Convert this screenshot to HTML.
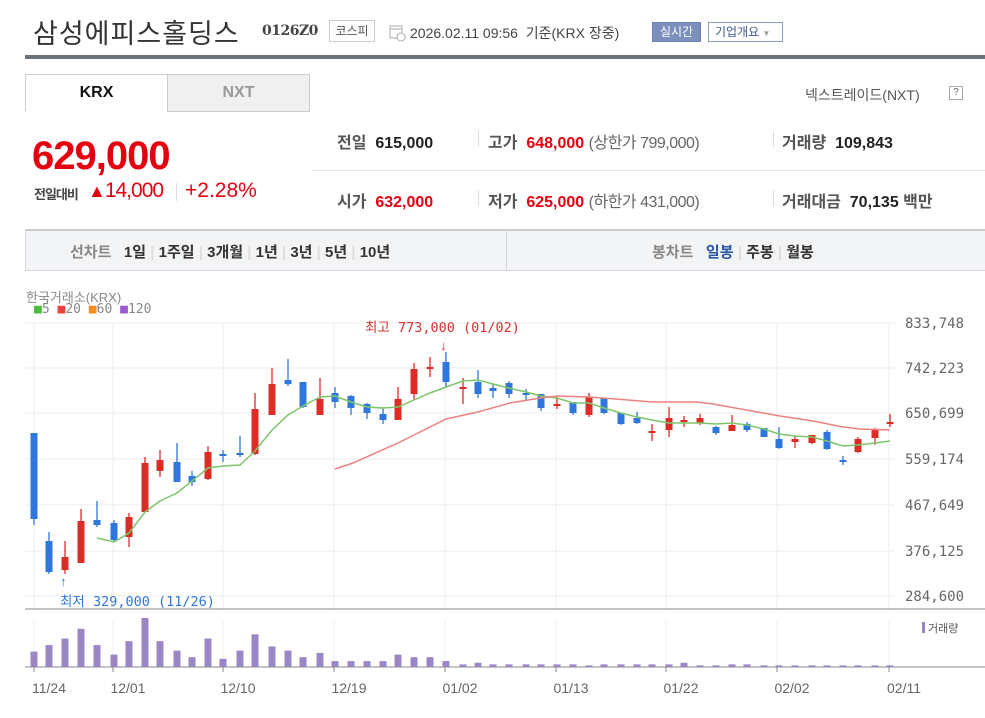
<!DOCTYPE html>
<html><head><meta charset="utf-8">
<style>
*{margin:0;padding:0;box-sizing:border-box}
body{width:985px;height:718px;background:#fff;font-family:"Liberation Sans","Noto Sans CJK KR",sans-serif;position:relative;overflow:hidden;color:#333}
.a{position:absolute;white-space:nowrap}
</style></head><body>
<div class="a" style="left:33px;top:12px;font-size:27px;color:#333;letter-spacing:1px">삼성에피스홀딩스</div>
<div class="a" style="left:262px;top:23px;font-size:14px;font-weight:bold;color:#444;font-family:'DejaVu Serif',serif;letter-spacing:-0.5px">0126Z0</div>
<div class="a" style="left:329px;top:20px;width:46px;height:22px;border:1px solid #ccc;font-size:12px;color:#555;text-align:center;line-height:20px">코스피</div>
<svg class="a" style="left:389px;top:24px" width="17" height="18"><rect x="1" y="2" width="12" height="12" fill="none" stroke="#aaa"/><line x1="1" y1="5" x2="13" y2="5" stroke="#aaa"/><circle cx="12" cy="13" r="4" fill="#fff" stroke="#aaa"/></svg>
<div class="a" style="left:410px;top:23px;font-size:14px;color:#444">2026.02.11 09:56 &nbsp;기준(KRX 장중)</div>
<div class="a" style="left:652px;top:22px;width:49px;height:20px;background:#7c8fbd;border:1px solid #6c80b0;color:#fff;font-size:12px;text-align:center;line-height:18px">실시간</div>
<div class="a" style="left:708px;top:22px;width:75px;height:20px;border:1px solid #8fa0c8;color:#3f5a8f;font-size:12px;line-height:18px;padding-left:6px">기업개요 <span style="font-size:8px;color:#999">▼</span></div>
<div class="a" style="left:25px;top:55px;width:960px;height:4px;background:#6b7078"></div>
<div class="a" style="left:25px;top:74px;width:143px;height:37px;border:1px solid #ccc;border-bottom:none;font-size:16px;font-weight:bold;color:#111;text-align:center;line-height:35px">KRX</div>
<div class="a" style="left:167px;top:74px;width:143px;height:38px;border:1px solid #ccc;background:#f0f0f0;font-size:16px;font-weight:bold;color:#999;text-align:center;line-height:35px">NXT</div>
<div class="a" style="left:805px;top:85px;font-size:14px;color:#555">넥스트레이드(NXT)</div>
<div class="a" style="left:949px;top:86px;width:14px;height:14px;border:1px solid #aaa;font-size:10px;text-align:center;line-height:12px;color:#666">?</div>
<div class="a" style="left:32px;top:134px;font-size:40px;font-weight:bold;color:#e4000f;letter-spacing:-1px">629,000</div>
<div class="a" style="left:34px;top:184px;font-size:13px;font-weight:bold;color:#444;letter-spacing:-1px">전일대비</div>
<div class="a" style="left:88px;top:179px;font-size:21px;color:#e4000f;letter-spacing:-1px"><span style="font-size:18px">▲</span>14,000</div>
<div class="a" style="left:176px;top:183px;width:1px;height:18px;background:#ddd"></div>
<div class="a" style="left:185px;top:179px;font-size:21px;color:#e4000f">+2.28%</div>
<div class="a" style="left:312px;top:170px;width:673px;height:1px;background:#e5e5e5"></div>
<div class="a" style="left:337px;top:129px;font-size:16px;color:#444"><b style="color:#555">전일</b>&nbsp; <b style="color:#222">615,000</b></div>
<div class="a" style="left:337px;top:188px;font-size:16px;color:#444"><b style="color:#555">시가</b>&nbsp; <b style="color:#e4000f">632,000</b></div>
<div class="a" style="left:478px;top:131px;width:1px;height:16px;background:#ddd"></div>
<div class="a" style="left:478px;top:190px;width:1px;height:16px;background:#ddd"></div>
<div class="a" style="left:488px;top:129px;font-size:16px;color:#555"><b>고가</b>&nbsp; <b style="color:#e4000f">648,000</b> <span style="color:#666;letter-spacing:-0.5px">(상한가 799,000)</span></div>
<div class="a" style="left:488px;top:188px;font-size:16px;color:#555"><b>저가</b>&nbsp; <b style="color:#e4000f">625,000</b> <span style="color:#666;letter-spacing:-0.5px">(하한가 431,000)</span></div>
<div class="a" style="left:773px;top:131px;width:1px;height:16px;background:#ddd"></div>
<div class="a" style="left:773px;top:190px;width:1px;height:16px;background:#ddd"></div>
<div class="a" style="left:782px;top:129px;font-size:16px;color:#555"><b>거래량</b>&nbsp; <b style="color:#222">109,843</b></div>
<div class="a" style="left:782px;top:188px;font-size:16px;color:#555"><b>거래대금</b>&nbsp; <b style="color:#222">70,135</b> <b>백만</b></div>
<div class="a" style="left:25px;top:229px;width:960px;height:42px;background:#f3f4f6;border-top:2px solid #c8cacd;border-bottom:1px solid #d5d7da;border-left:1px solid #d5d7da"></div>
<div class="a" style="left:506px;top:231px;width:1px;height:40px;background:#d5d7da"></div>
<div class="a" style="left:70px;top:241px;font-size:15px;color:#888;font-weight:bold">선차트 &nbsp;&nbsp;<span style="color:#333">1일</span> <span style="color:#ddd">|</span> <span style="color:#333">1주일</span> <span style="color:#ddd">|</span> <span style="color:#333">3개월</span> <span style="color:#ddd">|</span> <span style="color:#333">1년</span> <span style="color:#ddd">|</span> <span style="color:#333">3년</span> <span style="color:#ddd">|</span> <span style="color:#333">5년</span> <span style="color:#ddd">|</span> <span style="color:#333">10년</span></div>
<div class="a" style="left:652px;top:241px;font-size:15px;color:#888;font-weight:bold">봉차트 &nbsp;&nbsp;<span style="color:#2d55a6">일봉</span> <span style="color:#ddd">|</span> <span style="color:#333">주봉</span> <span style="color:#ddd">|</span> <span style="color:#333">월봉</span></div>
<div class="a" style="left:26px;top:287px;font-size:13px;color:#888">한국거래소(KRX)</div>
<div class="a" style="left:34px;top:302px;font-size:13px;color:#888;font-family:'DejaVu Sans Mono',monospace"><span style="color:#4cbb3c">■</span>5 <span style="color:#ee4040">■</span>20 <span style="color:#f58a1f">■</span>60 <span style="color:#9b59d0">■</span>120</div>
<svg class="a" id="ch" style="left:0;top:0" width="985" height="718"></svg>
<script>
var s=document.getElementById('ch'),h='';
var gy=[323,368,413,459,505,551,596],lb=['833,748','742,223','650,699','559,174','467,649','376,125','284,600'];
gy.forEach(function(y,i){h+='<line x1="25" y1="'+y+'" x2="895" y2="'+y+'" stroke="#eee"/>';h+='<text x="905" y="'+(y+5)+'" font-size="14" fill="#666" font-family="DejaVu Sans Mono,monospace">'+lb[i]+'</text>';});
[34,113,223,334,445,556,666,777,889].forEach(function(x){h+='<line x1="'+x+'" y1="323" x2="'+x+'" y2="609" stroke="#eee"/><line x1="'+x+'" y1="620" x2="'+x+'" y2="667" stroke="#f2f2f2"/>';});
h+='<line x1="25" y1="609" x2="985" y2="609" stroke="#888"/><line x1="25" y1="667" x2="985" y2="667" stroke="#888"/>';
var c=[[34,433,519,433,525,0],[49,541,572,532,574,0],[65,557,570,541,574,1],[81,521,563,509,563,1],[97,520,525,501,527,0],[114,523,540,520,542,0],[129,517,537,513,547,1],[145,463,512,457,512,1],[160,460,471,450,477,1],[177,462,482,443,482,0],[192,476,482,471,486,0],[208,452,479,446,480,1],[223,454,456,450,462,0],[240,453,455,436,457,0],[255,409,454,393,455,1],[272,384,415,368,415,1],[288,380,384,359,386,0],[303,382,407,382,408,0],[320,399,415,378,415,1],[335,393,402,387,408,0],[351,396,408,395,415,0],[367,404,413,403,419,0],[383,414,420,408,424,0],[398,399,420,387,420,1],[414,369,394,363,400,1],[430,367,368,357,377,1],[446,362,382,352,388,0],[463,387,388,378,404,1],[478,382,394,370,398,0],[493,388,391,384,398,0],[509,383,394,381,398,0],[526,393,395,389,400,0],[541,394,408,394,411,0],[557,404,405,397,409,1],[573,402,413,402,415,0],[589,397,415,393,417,1],[604,398,413,398,414,0],[621,413,424,413,425,0],[637,418,423,412,424,0],[652,431,432,424,441,1],[669,418,430,407,437,1],[684,420,422,416,427,1],[700,418,423,414,425,1],[716,427,433,426,435,0],[732,425,431,415,431,1],[747,424,430,422,432,0],[764,428,437,428,437,0],[779,439,448,427,449,0],[795,439,442,436,448,1],[812,435,443,435,444,1],[827,432,449,430,450,0],[843,460,461,456,465,0],[858,439,452,437,453,1],[875,430,438,428,445,1],[890,422,423,414,427,1]];
c.forEach(function(d){var col=d[5]?'#dd2c25':'#2f77dd';h+='<line x1="'+d[0]+'" y1="'+d[3]+'" x2="'+d[0]+'" y2="'+d[4]+'" stroke="'+col+'" stroke-width="1.3"/>';h+='<rect x="'+(d[0]-3.5)+'" y="'+d[1]+'" width="7" height="'+Math.max(2,d[2]-d[1])+'" fill="'+col+'"/>';});
h+='<polyline fill="none" stroke="#7cc66a" stroke-width="1.5" points="97,538 114,542 129,533 145,512 160,501 177,493 192,481 208,468 223,466 240,465 255,451 272,430 288,415 303,406 320,397 335,396 351,402 367,407 383,408 398,407 414,400 430,393 446,387 463,381 478,380 493,384 509,388 526,392 541,396 557,398 573,403 589,403 604,408 621,413 637,417 652,420 669,423 684,423 700,423 716,424 732,423 747,425 764,429 779,434 795,436 812,437 827,441 843,446 858,445 875,443 890,441"/>';
h+='<polyline fill="none" stroke="#ee8080" stroke-width="1.5" points="335,469 353,463 398,443 446,419 478,412 510,403 540,398 557,396 590,397 653,402 697,402 713,404 780,416 813,421 843,427 860,429 890,430"/>';
h+='<text x="365" y="332" font-size="13.5" fill="#dd3030" font-family="DejaVu Sans Mono,Noto Sans CJK KR,monospace">최고 773,000 (01/02)</text><text x="440" y="350" font-size="13" fill="#dd3030">↓</text>';
h+='<text x="60" y="586" font-size="13" fill="#2f77dd">↑</text><text x="60" y="606" font-size="13.5" fill="#2f77dd" font-family="DejaVu Sans Mono,Noto Sans CJK KR,monospace">최저 329,000 (11/26)</text>';
var v=[158,138,118,88,138,167,126,55,126,155,175,118,180,155,105,142,155,175,162,187,187,187,187,167,175,175,187,197,192,197,197,197,197,197,197,200,197,197,197,197,197,192,200,200,197,197,200,200,200,200,200,200,200,200,200];
c.forEach(function(d,i){var hh=(205-v[i])*0.327;h+='<rect x="'+(d[0]-3.5)+'" y="'+(667-hh)+'" width="7" height="'+hh+'" fill="#9b86c4"/>';});
h+='<rect x="922" y="622" width="3" height="11" fill="#9b86c4"/><text x="928" y="632" font-size="11" fill="#555" font-family="Noto Sans CJK KR,sans-serif">거래량</text>';
[[34,'11/24'],[113,'12/01'],[223,'12/10'],[334,'12/19'],[445,'01/02'],[556,'01/13'],[666,'01/22'],[777,'02/02'],[889,'02/11']].forEach(function(t){h+='<line x1="'+t[0]+'" y1="667" x2="'+t[0]+'" y2="672" stroke="#888"/><text x="'+(t[0]+15)+'" y="693" font-size="14" fill="#666" text-anchor="middle" font-family="Liberation Sans,sans-serif">'+t[1]+'</text>';});
s.innerHTML=h;
</script>
</body></html>
